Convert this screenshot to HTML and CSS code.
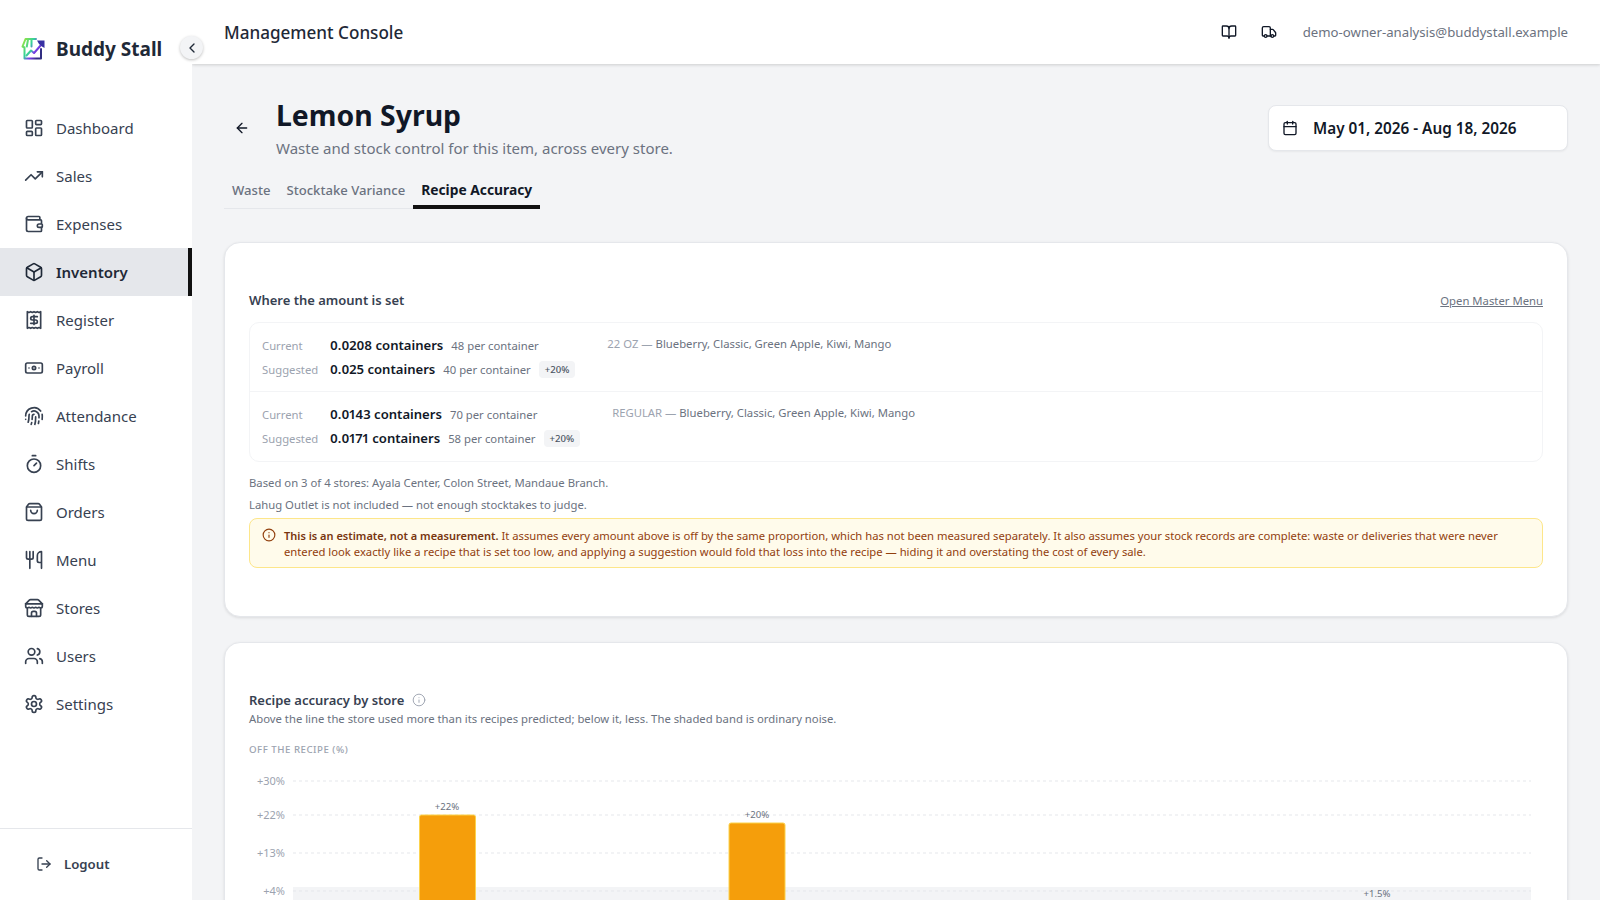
FILE: index.html
```html
<!DOCTYPE html>
<html lang="en">
<head>
<meta charset="utf-8">
<title>Lemon Syrup</title>
<link rel="stylesheet" href="styles.css">
</head>
<body>
<div class="app">
  <aside class="sidebar">
    <div class="brand">
      <svg class="logo" viewBox="0 0 24 24" fill="none" stroke-width="1.7" stroke-linecap="round" stroke-linejoin="round">
        <defs><linearGradient id="lg" x1="0" y1="0" x2="1" y2="0.6"><stop offset="0" stop-color="#a3e635"/><stop offset=".45" stop-color="#34d399"/><stop offset=".7" stop-color="#7c3aed"/><stop offset="1" stop-color="#312e81"/></linearGradient></defs>
        <path stroke="url(#lg)" d="M3.5 10.5V21.5H20V12M3.5 10.5L1.5 9.5 4.5 2H15M7 2.5L5.8 9.5M10.5 2.5V9.5"/>
        <path stroke="url(#lg)" stroke-width="2" d="M5.5 18.5l4.5-5 3 2.5 7-8"/>
        <path fill="#3730a3" stroke="none" d="M16 3.5H23.5V11L21 9.5 18 7 Z"/>
      </svg>
      <span class="brand-name">Buddy Stall</span>
    </div>
    <button class="collapse" type="button"><svg class="ic16" viewBox="0 0 24 24"><path d="m15 18-6-6 6-6"/></svg></button>
    <nav class="nav">
      <a class="nav-item"><svg class="ic" viewBox="0 0 24 24"><rect width="7" height="9" x="3" y="3" rx="1"/><rect width="7" height="5" x="14" y="3" rx="1"/><rect width="7" height="9" x="14" y="12" rx="1"/><rect width="7" height="5" x="3" y="16" rx="1"/></svg>Dashboard</a>
      <a class="nav-item"><svg class="ic" viewBox="0 0 24 24"><polyline points="22 7 13.5 15.5 8.5 10.5 2 17"/><polyline points="16 7 22 7 22 13"/></svg>Sales</a>
      <a class="nav-item"><svg class="ic" viewBox="0 0 24 24"><path d="M19 7V4a1 1 0 0 0-1-1H5a2 2 0 0 0 0 4h15a1 1 0 0 1 1 1v4h-3a2 2 0 0 0 0 4h3a1 1 0 0 0 1-1v-2a1 1 0 0 0-1-1"/><path d="M3 5v14a2 2 0 0 0 2 2h15a1 1 0 0 0 1-1v-4"/></svg>Expenses</a>
      <a class="nav-item active"><svg class="ic" viewBox="0 0 24 24"><path d="M21 8a2 2 0 0 0-1-1.73l-7-4a2 2 0 0 0-2 0l-7 4A2 2 0 0 0 3 8v8a2 2 0 0 0 1 1.73l7 4a2 2 0 0 0 2 0l7-4A2 2 0 0 0 21 16Z"/><path d="m3.3 7 8.7 5 8.7-5"/><path d="M12 22V12"/></svg>Inventory</a>
      <a class="nav-item"><svg class="ic" viewBox="0 0 24 24"><path d="M4 2v20l2-1 2 1 2-1 2 1 2-1 2 1 2-1 2 1V2l-2 1-2-1-2 1-2-1-2 1-2-1-2 1Z"/><path d="M16 8h-6a2 2 0 1 0 0 4h4a2 2 0 1 1 0 4H8"/><path d="M12 17.5v-11"/></svg>Register</a>
      <a class="nav-item"><svg class="ic" viewBox="0 0 24 24"><rect width="20" height="12" x="2" y="6" rx="2"/><circle cx="12" cy="12" r="2"/><path d="M6 12h.01M18 12h.01"/></svg>Payroll</a>
      <a class="nav-item"><svg class="ic" viewBox="0 0 24 24"><path d="M12 10a2 2 0 0 0-2 2c0 1.02-.1 2.51-.26 4"/><path d="M14 13.12c0 2.38 0 6.38-1 8.88"/><path d="M17.29 21.02c.12-.6.43-2.3.5-3.02"/><path d="M2 12a10 10 0 0 1 18-6"/><path d="M2 16h.01"/><path d="M21.8 16c.2-2 .131-5.354 0-6"/><path d="M5 19.5C5.5 18 6 15 6 12a6 6 0 0 1 .34-2"/><path d="M8.65 22c.21-.66.45-1.32.57-2"/><path d="M9 6.8a6 6 0 0 1 9 5.2v2"/></svg>Attendance</a>
      <a class="nav-item"><svg class="ic" viewBox="0 0 24 24"><line x1="10" x2="14" y1="2" y2="2"/><line x1="12" x2="15" y1="14" y2="11"/><circle cx="12" cy="14" r="8"/></svg>Shifts</a>
      <a class="nav-item"><svg class="ic" viewBox="0 0 24 24"><path d="M16 10a4 4 0 0 1-8 0"/><path d="M3.103 6.034h17.794"/><path d="M3.4 5.467a2 2 0 0 0-.4 1.2V20a2 2 0 0 0 2 2h14a2 2 0 0 0 2-2V6.667a2 2 0 0 0-.4-1.2l-2-2.667A2 2 0 0 0 17 2H7a2 2 0 0 0-1.6.8z"/></svg>Orders</a>
      <a class="nav-item"><svg class="ic" viewBox="0 0 24 24"><path d="M3 2v7c0 1.1.9 2 2 2h4a2 2 0 0 0 2-2V2"/><path d="M7 2v20"/><path d="M21 15V2a5 5 0 0 0-5 5v6c0 1.1.9 2 2 2h3Zm0 0v7"/></svg>Menu</a>
      <a class="nav-item"><svg class="ic" viewBox="0 0 24 24"><path d="m2 7 4.41-4.41A2 2 0 0 1 7.83 2h8.34a2 2 0 0 1 1.42.59L22 7"/><path d="M4 12v8a2 2 0 0 0 2 2h12a2 2 0 0 0 2-2v-8"/><path d="M15 22v-4a2 2 0 0 0-2-2h-2a2 2 0 0 0-2 2v4"/><path d="M2 7h20"/><path d="M22 7v3a2 2 0 0 1-2 2a2.7 2.7 0 0 1-1.59-.63.7.7 0 0 0-.82 0A2.7 2.7 0 0 1 16 12a2.7 2.7 0 0 1-1.59-.63.7.7 0 0 0-.82 0A2.7 2.7 0 0 1 12 12a2.7 2.7 0 0 1-1.59-.63.7.7 0 0 0-.82 0A2.7 2.7 0 0 1 8 12a2.7 2.7 0 0 1-1.59-.63.7.7 0 0 0-.82 0A2.7 2.7 0 0 1 4 12a2 2 0 0 1-2-2V7"/></svg>Stores</a>
      <a class="nav-item"><svg class="ic" viewBox="0 0 24 24"><path d="M16 21v-2a4 4 0 0 0-4-4H6a4 4 0 0 0-4 4v2"/><circle cx="9" cy="7" r="4"/><path d="M22 21v-2a4 4 0 0 0-3-3.87"/><path d="M16 3.13a4 4 0 0 1 0 7.75"/></svg>Users</a>
      <a class="nav-item"><svg class="ic" viewBox="0 0 24 24"><path d="M12.22 2h-.44a2 2 0 0 0-2 2v.18a2 2 0 0 1-1 1.73l-.43.25a2 2 0 0 1-2 0l-.15-.08a2 2 0 0 0-2.73.73l-.22.38a2 2 0 0 0 .73 2.73l.15.1a2 2 0 0 1 1 1.72v.51a2 2 0 0 1-1 1.74l-.15.09a2 2 0 0 0-.73 2.73l.22.38a2 2 0 0 0 2.73.73l.15-.08a2 2 0 0 1 2 0l.43.25a2 2 0 0 1 1 1.73V20a2 2 0 0 0 2 2h.44a2 2 0 0 0 2-2v-.18a2 2 0 0 1 1-1.73l.43-.25a2 2 0 0 1 2 0l.15.08a2 2 0 0 0 2.73-.73l.22-.39a2 2 0 0 0-.73-2.73l-.15-.08a2 2 0 0 1-1-1.74v-.5a2 2 0 0 1 1-1.74l.15-.09a2 2 0 0 0 .73-2.73l-.22-.38a2 2 0 0 0-2.73-.73l-.15.08a2 2 0 0 1-2 0l-.43-.25a2 2 0 0 1-1-1.73V4a2 2 0 0 0-2-2z"/><circle cx="12" cy="12" r="3"/></svg>Settings</a>
    </nav>
    <div class="side-foot">
      <a class="logout"><svg class="ic16" viewBox="0 0 24 24"><path d="M9 21H5a2 2 0 0 1-2-2V5a2 2 0 0 1 2-2h4"/><polyline points="16 17 21 12 16 7"/><line x1="21" x2="9" y1="12" y2="12"/></svg>Logout</a>
    </div>
  </aside>

  <div class="body">
    <header class="topbar">
      <div class="console">Management Console</div>
      <div class="top-right">
        <svg class="ic16 dark" viewBox="0 0 24 24"><path d="M12 7v14"/><path d="M3 18a1 1 0 0 1-1-1V4a1 1 0 0 1 1-1h5a4 4 0 0 1 4 4 4 4 0 0 1 4-4h5a1 1 0 0 1 1 1v13a1 1 0 0 1-1 1h-6a3 3 0 0 0-3 3 3 3 0 0 0-3-3z"/></svg>
        <svg class="ic16 dark" viewBox="0 0 24 24"><path d="M14 18V6a2 2 0 0 0-2-2H4a2 2 0 0 0-2 2v11a1 1 0 0 0 1 1h2"/><path d="M15 18H9"/><path d="M19 18h2a1 1 0 0 0 1-1v-3.65a1 1 0 0 0-.22-.624l-3.48-4.35A1 1 0 0 0 17.52 8H14"/><circle cx="17" cy="18" r="2"/><circle cx="7" cy="18" r="2"/></svg>
        <span class="email">demo-owner-analysis@buddystall.example</span>
      </div>
    </header>

    <main class="content">
      <div class="page-head">
        <div class="head-left">
          <svg class="ic16 back" viewBox="0 0 24 24"><path d="m12 19-7-7 7-7"/><path d="M19 12H5"/></svg>
          <div>
            <h1 class="title">Lemon Syrup</h1>
            <p class="subtitle">Waste and stock control for this item, across every store.</p>
          </div>
        </div>
        <div class="date-picker">
          <svg class="ic16 dark" viewBox="0 0 24 24"><path d="M8 2v4"/><path d="M16 2v4"/><rect width="18" height="18" x="3" y="4" rx="2"/><path d="M3 10h18"/></svg>
          <span>May 01, 2026 - Aug 18, 2026</span>
        </div>
      </div>

      <div class="tabs">
        <a class="tab">Waste</a>
        <a class="tab">Stocktake Variance</a>
        <a class="tab on">Recipe Accuracy</a>
      </div>

      <section class="card first">
        <div class="card-top">
          <h2 class="card-title">Where the amount is set</h2>
          <a class="master">Open Master Menu</a>
        </div>
        <div class="sizes">
          <div class="size-row">
            <div class="amounts">
              <div class="amount"><span class="lbl">Current</span><b class="val">0.0208 containers</b><span class="per">48 per container</span></div>
              <div class="amount"><span class="lbl">Suggested</span><b class="val">0.025 containers</b><span class="per">40 per container</span><span class="delta">+20%</span></div>
            </div>
            <div class="applies"><span class="size">22 OZ —</span> Blueberry, Classic, Green Apple, Kiwi, Mango</div>
          </div>
          <div class="size-row">
            <div class="amounts">
              <div class="amount"><span class="lbl">Current</span><b class="val">0.0143 containers</b><span class="per">70 per container</span></div>
              <div class="amount"><span class="lbl">Suggested</span><b class="val">0.0171 containers</b><span class="per">58 per container</span><span class="delta">+20%</span></div>
            </div>
            <div class="applies"><span class="size">REGULAR —</span> Blueberry, Classic, Green Apple, Kiwi, Mango</div>
          </div>
        </div>
        <p class="note first-note">Based on 3 of 4 stores: Ayala Center, Colon Street, Mandaue Branch.</p>
        <p class="note">Lahug Outlet is not included — not enough stocktakes to judge.</p>
        <div class="alert">
          <svg class="ic14 amber" viewBox="0 0 24 24"><circle cx="12" cy="12" r="10"/><path d="M12 16v-4"/><path d="M12 8h.01"/></svg>
          <p><strong>This is an estimate, not a measurement.</strong> It assumes every amount above is off by the same proportion, which has not been measured separately. It also assumes your stock records are complete: waste or deliveries that were never entered look exactly like a recipe that is set too low, and applying a suggestion would fold that loss into the recipe — hiding it and overstating the cost of every sale.</p>
        </div>
      </section>

      <section class="card second">
        <h2 class="card-title with-ic">Recipe accuracy by store <svg class="ic13 muted" viewBox="0 0 24 24"><circle cx="12" cy="12" r="10"/><path d="M12 16v-4"/><path d="M12 8h.01"/></svg></h2>
        <p class="desc">Above the line the store used more than its recipes predicted; below it, less. The shaded band is ordinary noise.</p>
        <div class="axis-title">Off the recipe (%)</div>
        <svg class="chart" viewBox="0 0 1294 300" width="1294" height="300">
          <rect class="band" x="44" y="121" width="1238" height="60"/>
          <line class="grid" x1="44" x2="1282" y1="15" y2="15"/>
          <line class="grid" x1="44" x2="1282" y1="49" y2="49"/>
          <line class="grid" x1="44" x2="1282" y1="87" y2="87"/>
          <line class="grid" x1="44" x2="1282" y1="125" y2="125"/>
          <text class="tick" x="36" y="19">+30%</text>
          <text class="tick" x="36" y="53">+22%</text>
          <text class="tick" x="36" y="91">+13%</text>
          <text class="tick" x="36" y="129">+4%</text>
          <path class="bar" d="M170.5 200V51a2 2 0 0 1 2-2h52a2 2 0 0 1 2 2V200Z"/>
          <path class="bar" d="M480 200V59a2 2 0 0 1 2-2h52a2 2 0 0 1 2 2V200Z"/>
          <text class="barval" x="198" y="44">+22%</text>
          <text class="barval" x="508" y="52">+20%</text>
          <text class="barval" x="1128" y="131">+1.5%</text>
        </svg>
      </section>
    </main>
  </div>
</div>
</body>
</html>
```
FILE: styles.css
```css
* { box-sizing: border-box; }
html, body { margin: 0; height: 100%; overflow: hidden; }
body { font-family: "Noto Sans", "Liberation Sans", sans-serif; color: #111827; background: #f3f4f6; }
p, h1, h2 { margin: 0; }
svg { display: block; flex: none; fill: none; stroke: currentColor; stroke-width: 2; stroke-linecap: round; stroke-linejoin: round; }
.ic { width: 20px; height: 20px; margin-right: 12px; }
.ic16 { width: 16px; height: 16px; }
.ic14 { width: 14px; height: 14px; }
.ic13 { width: 14px; height: 14px; }
.dark { color: #111827; }
.muted { color: #9ca3af; stroke-width: 1.6; }

.app { display: flex; height: 900px; }
.sidebar { position: relative; z-index: 3; width: 192px; flex: none; background: #fff; display: flex; flex-direction: column; }
.brand { height: 104px; padding: 0 0 6px 21px; display: flex; align-items: center; gap: 11px; }
.logo { width: 24px; height: 24px; }
.brand-name { font-size: 19px; font-weight: 700; color: #1f2937; line-height: 28px; }
.collapse { position: absolute; top: 36px; left: 180px; width: 23px; height: 23px; padding: 0; border: 0; border-radius: 50%; background: #f3f4f6; color: #1f2937; display: flex; align-items: center; justify-content: center; box-shadow: 0 1px 3px rgba(0,0,0,.25); }
.nav { flex: 1; }
.nav-item { height: 48px; padding-left: 24px; display: flex; align-items: center; font-size: 15px; color: #374151; }
.nav-item .ic { margin-right: 12px; }
.nav-item.active { background: #e5e7eb; border-right: 4px solid #111; color: #1f2937; font-weight: 600; }
.side-foot { height: 72px; border-top: 1px solid #e5e7eb; display: flex; align-items: center; padding: 0 0 2px 36px; }
.logout { display: flex; align-items: center; gap: 12px; font-size: 13.2px; font-weight: 600; color: #374151; }

.body { flex: 1; min-width: 0; display: flex; flex-direction: column; }
.topbar { height: 64px; flex: none; background: #fff; padding: 0 32px; display: flex; align-items: center; justify-content: space-between; box-shadow: 0 1px 3px rgba(0,0,0,.16); position: relative; z-index: 2; }
.console { font-size: 17.1px; font-weight: 500; color: #1f2937; }
.top-right { display: flex; align-items: center; gap: 24px; }
.email { font-size: 13.2px; color: #6b7280; margin-left: 2px; }

.content { flex: 1; padding: 33px 32px 0; overflow: hidden; }
.page-head { display: flex; align-items: center; justify-content: space-between; }
.head-left { display: flex; align-items: center; }
.back { margin: 0 26px 2px 10px; }
.title { font-size: 28.4px; line-height: 36px; font-weight: 700; color: #111827; }
.subtitle { font-size: 15px; line-height: 24px; margin-top: 3px; color: #6b7280; }
.date-picker { width: 300px; height: 46px; margin-bottom: 2px; background: #fff; border: 1px solid #e5e7eb; border-radius: 8px; box-shadow: 0 1px 2px rgba(0,0,0,.05); padding-left: 13px; display: flex; align-items: center; gap: 15px; font-size: 15.3px; font-weight: 600; color: #111827; }

.tabs { display: flex; width: fit-content; margin-top: 12px; border-bottom: 1px solid #e5e7eb; height: 37px; }
.tab { height: 37px; padding: 8px; font-size: 13.1px; line-height: 20px; font-weight: 500; color: #6b7280; }
.tab.on { font-weight: 700; font-size: 13.8px; color: #111827; border-bottom: 4px solid #111; }

.card { background: #fff; border: 1px solid #e5e7eb; border-radius: 16px; box-shadow: 0 1px 3px rgba(0,0,0,.1); padding: 47px 24px; }
.first { margin-top: 33px; height: 375px; }
.second { margin-top: 25px; height: 600px; }
.card-top { display: flex; align-items: center; justify-content: space-between; height: 20px; margin-bottom: 12px; }
.card-title { font-size: 13px; line-height: 20px; font-weight: 600; color: #374151; }
.master { font-size: 11.3px; color: #6b7280; text-decoration: underline; }
.sizes { border: 1px solid #f3f4f6; border-radius: 10px; }
.size-row { height: 68px; padding: 10px 12px 0; display: flex; gap: 32px; align-items: flex-start; }
.size-row + .size-row { height: 70px; border-top: 1px solid #f3f4f6; }
.amount { display: flex; align-items: center; height: 24px; white-space: nowrap; }
.lbl { width: 68px; font-size: 11.3px; color: #9ca3af; }
.val { font-size: 13.1px; font-weight: 600; color: #111827; font-variant-numeric: proportional-nums; }
.per { font-size: 11.3px; color: #6b7280; margin-left: 8px; }
.delta { margin-left: 8px; font-size: 9.6px; line-height: 17px; padding: 0 6px; background: #f3f4f6; border-radius: 4px; color: #4b5563; font-weight: 500; }
.applies { font-size: 11.3px; line-height: 20px; margin-top: 1px; color: #6b7280; }
.size { color: #9ca3af; }
.note { font-size: 11.3px; line-height: 16px; color: #6b7280; margin-top: 6px; }
.first-note { margin-top: 13px; }
.alert { margin-top: 5px; height: 50px; padding: 9px 12px 0; border: 1px solid #fde68a; border-radius: 8px; background: #fffbeb; display: flex; gap: 8px; font-size: 11.25px; line-height: 16px; color: #92400e; }
.alert p { margin: 0; }
.alert strong { color: #78350f; font-weight: 600; font-size: 11px; }
.amber { color: #92400e; }
.with-ic { display: flex; align-items: center; gap: 8px; }
.desc { font-size: 11.3px; line-height: 16px; color: #6b7280; margin-top: 1px; }
.axis-title { font-size: 9.7px; line-height: 14px; margin-top: 16px; text-transform: uppercase; letter-spacing: .5px; font-weight: 500; color: #9ca3af; }
.chart { margin: 9px 0 0; stroke: none; }
.band { fill: #f3f4f6; }
.grid { stroke: #e5e7eb; stroke-width: 1; stroke-dasharray: 3 3; stroke-linecap: butt; }
.tick { font-size: 11px; fill: #9ca3af; text-anchor: end; stroke: none; }
.bar { fill: #f59e0b; stroke: #fcd34d; stroke-width: 1; }
.barval { font-size: 9.6px; fill: #6b7280; text-anchor: middle; stroke: none; }
```
